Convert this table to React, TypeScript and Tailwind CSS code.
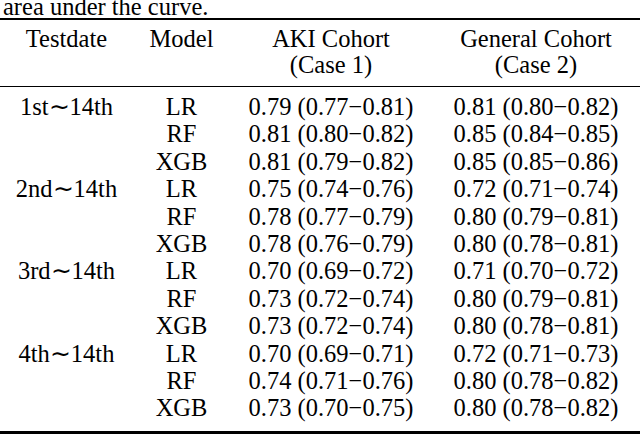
import React from "react";

const groups = [
  {
    date: "1st∼14th",
    rows: [
      ["LR", "0.79 (0.77−0.81)", "0.81 (0.80−0.82)"],
      ["RF", "0.81 (0.80−0.82)", "0.85 (0.84−0.85)"],
      ["XGB", "0.81 (0.79−0.82)", "0.85 (0.85−0.86)"],
    ],
  },
  {
    date: "2nd∼14th",
    rows: [
      ["LR", "0.75 (0.74−0.76)", "0.72 (0.71−0.74)"],
      ["RF", "0.78 (0.77−0.79)", "0.80 (0.79−0.81)"],
      ["XGB", "0.78 (0.76−0.79)", "0.80 (0.78−0.81)"],
    ],
  },
  {
    date: "3rd∼14th",
    rows: [
      ["LR", "0.70 (0.69−0.72)", "0.71 (0.70−0.72)"],
      ["RF", "0.73 (0.72−0.74)", "0.80 (0.79−0.81)"],
      ["XGB", "0.73 (0.72−0.74)", "0.80 (0.78−0.81)"],
    ],
  },
  {
    date: "4th∼14th",
    rows: [
      ["LR", "0.70 (0.69−0.71)", "0.72 (0.71−0.73)"],
      ["RF", "0.74 (0.71−0.76)", "0.80 (0.78−0.82)"],
      ["XGB", "0.73 (0.70−0.75)", "0.80 (0.78−0.82)"],
    ],
  },
];

const cols = "grid grid-cols-[133px_97px_202px_208px] text-center";

export default function App() {
  return (
    <div className="h-[435px] w-[640px] overflow-hidden bg-white [font-family:'Liberation_Serif','Times_New_Roman',serif] text-[24.5px] text-black">
      <div className="mt-[-7px] h-[25px] pl-[3px] leading-[27px] whitespace-nowrap">area under the curve.</div>

      <div className="border-t-2 border-black pt-[6px] pb-[8px] leading-[26px]">
        <div className={cols}>
          <span>Testdate</span>
          <span>Model</span>
          <span>AKI Cohort</span>
          <span>General Cohort</span>
        </div>
        <div className={cols}>
          <span />
          <span />
          <span>(Case 1)</span>
          <span>(Case 2)</span>
        </div>
      </div>

      <div className="border-t border-b-[3px] border-black pt-[6px] pb-[9px] leading-[27.4px]">
        {groups.map((g) =>
          g.rows.map((r, i) => (
            <div key={g.date + r[0]} className={cols}>
              <span>{i === 0 ? g.date : ""}</span>
              <span>{r[0]}</span>
              <span>{r[1]}</span>
              <span>{r[2]}</span>
            </div>
          ))
        )}
      </div>
    </div>
  );
}
